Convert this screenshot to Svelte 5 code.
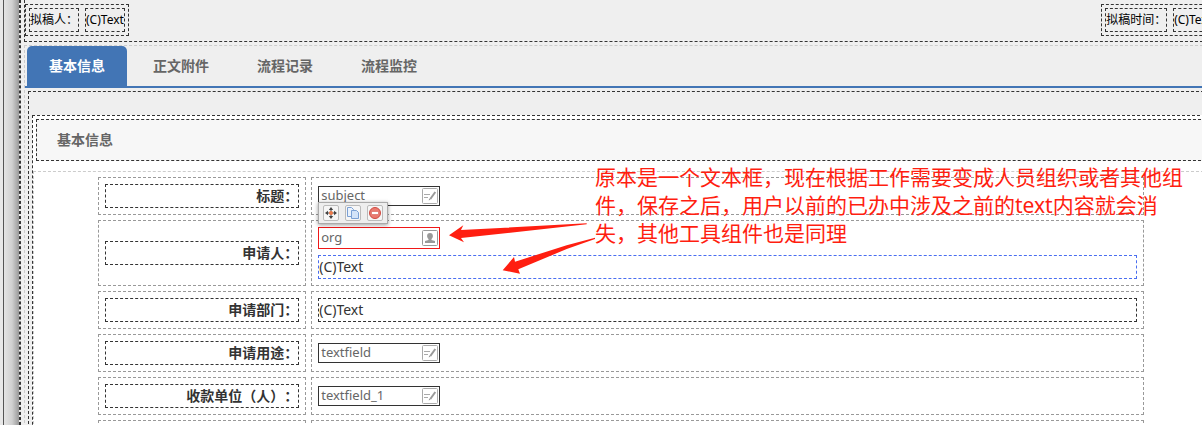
<script>
  let activeTab = $state('basic');
  let selected = $state('org');

  const tabs = [
    { id: 'basic', label: '基本信息' },
    { id: 'files', label: '正文附件' },
    { id: 'records', label: '流程记录' },
    { id: 'monitor', label: '流程监控' },
  ];

  const rows = [
    { id: 'subject', label: '标题：', field: 'subject', icon: 'edit' },
    { id: 'org', label: '申请人：', field: 'org', icon: 'person', text: '(C)Text', linked: true },
    { id: 'dept', label: '申请部门：', text: '(C)Text' },
    { id: 'usage', label: '申请用途：', field: 'textfield', icon: 'edit' },
    { id: 'payee', label: '收款单位（人）：', field: 'textfield_1', icon: 'edit' },
    { id: 'next', label: '', text: '' },
  ];
</script>

<div class="designer">
  <div class="splitter"></div>
  <main class="canvas">
    <header class="meta">
      <div class="meta-group">
        <span class="box">拟稿人：</span>
        <span class="box">(C)Text</span>
      </div>
      <div class="meta-group">
        <span class="box">拟稿时间：</span>
        <span class="box">(C)Text</span>
      </div>
    </header>

    <section class="body">
      <nav class="tabs">
        {#each tabs as tab}
          <button
            type="button"
            class="tab"
            class:active={activeTab === tab.id}
            onclick={() => (activeTab = tab.id)}
          >{tab.label}</button>
        {/each}
      </nav>

      <div class="panel">
        <div class="form">
          <h2>基本信息</h2>
          <div class="form-body">
            {#each rows as row}
              <div class="row">
                <div class="cell">
                  <label class="box name" for={row.field ? row.id : undefined}>{row.label}</label>
                </div>
                <div class="cell content">
                  {#if row.field}
                    <div class="field" class:selected={selected === row.id}>
                      <input
                        id={row.id}
                        type="text"
                        value={row.field}
                        readonly
                        onfocus={() => (selected = row.id)}
                      />
                      {#if row.icon === 'person'}
                        <svg class="icon" viewBox="0 0 16 16" aria-hidden="true">
                          <rect x="0.5" y="0.5" width="15" height="15" rx="1" fill="#fff" stroke="#999" />
                          <path d="M8 3c2 0 2.900 1.300 2.900 3 0 1.400-.7 2.500-1.400 3.100v.9l3.500 1V13H3v-2l3.500-1v-.9C5.800 8.500 5.100 7.400 5.100 6c0-1.700.9-3 2.900-3z" fill="#999" />
                        </svg>
                      {:else}
                        <svg class="icon" viewBox="0 0 16 16" aria-hidden="true">
                          <rect x="0.5" y="0.5" width="15" height="15" rx="1" fill="#fff" stroke="#aaa" />
                          <path d="M2 6.500h6M2 9.500h4" stroke="#aaa" />
                          <path d="M13.300 4L8.300 11" stroke="#999" stroke-width="2" />
                          <path d="M7.200 10.400l-.5 2.200 2-1z" fill="#999" />
                        </svg>
                      {/if}
                      {#if selected === row.id}
                        <div class="toolbar">
                          <button type="button" aria-label="移动">
                            <svg viewBox="0 0 14 14" aria-hidden="true">
                              <path d="M7 1l2.200 3H4.800zM7 13l-2.200-3h4.400zM1 7l3-2.200v4.400zM13 7l-3 2.200V4.800z" fill="#444" />
                              <path d="M7 3v8M3 7h8" stroke="#444" />
                              <circle cx="7" cy="7" r="2" fill="#ee7a4a" />
                            </svg>
                          </button>
                          <button type="button" aria-label="复制">
                            <svg viewBox="0 0 14 14" aria-hidden="true">
                              <path d="M1.500 1.500h4l2 2v7h-6z" fill="#eaf2fc" stroke="#7ba0d4" />
                              <path d="M5.500 4.500h5l2 2v6h-7z" fill="#d3e3f8" stroke="#7ba0d4" />
                            </svg>
                          </button>
                          <button type="button" aria-label="删除">
                            <svg viewBox="0 0 14 14" aria-hidden="true">
                              <circle cx="7" cy="7" r="5.500" fill="#ea7a70" stroke="#cf4a41" />
                              <rect x="3.500" y="5.500" width="7" height="3" rx="0.5" fill="#fff" stroke="#cf4a41" stroke-width="0.5" />
                            </svg>
                          </button>
                        </div>
                      {/if}
                    </div>
                  {/if}
                  {#if row.text !== undefined}
                    <div class="box value" class:linked={row.linked}>{row.text}</div>
                  {/if}
                </div>
              </div>
            {/each}

            <div class="note">
              <svg viewBox="0 0 150 60" aria-hidden="true">
                <path d="M0 24.300L14.300 14.300 12 19 137.700 12.300v1L12 27l3 4.300z" />
                <path d="M53.700 59.300L65 46l1 4.700 51.700-16.400L146 26.700V28l-28.300 10-48.400 20.300 1.700 4.400z" />
              </svg>
              <p>
                原本是一个文本框，现在根据工作需要变成人员组织或者其他组<br />件，保存之后，用户以前的已办中涉及之前的text内容就会消<br />失，其他工具组件也是同理
              </p>
            </div>
          </div>
        </div>
      </div>
    </section>
  </main>
</div>

<style>
  :global(body) {
    margin: 0;
    background: #efefef;
  }

  .designer {
    display: flex;
    height: 100vh;
    overflow: hidden;
    font-family: 'Noto Sans', 'Noto Sans CJK SC', sans-serif;
    font-size: 14px;
    line-height: 22px;
    color: #333;
    text-spacing-trim: space-all;
  }

  .splitter {
    flex: 0 0 21px;
    display: flex;
    box-sizing: border-box;
    border-right: 1px dashed #333;
    background: linear-gradient(90deg, #e8e8e8 3px, #555 3px, #555 4px, #e4e4e4 4px, #d0d0d0 12px, #999 19px, #efefef 19px);
  }
  .splitter::after {
    content: '';
    flex: 1;
    border-right: 1px dashed #333;
  }

  /* the form is drawn wider than the visible area */
  .canvas {
    flex: 1;
    min-width: 0;
    margin: 0 -16px 0 3px;
  }

  .box {
    border: 1px dashed #333;
    min-height: 22px;
  }

  .meta {
    display: flex;
    justify-content: space-between;
    padding: 4px 0 5px;
    border: 1px dashed #333;
    border-top: none;
    font-size: 12px;
    color: #000;
  }
  .meta-group {
    display: flex;
    gap: 6px;
    padding: 3px;
    border: 1px dashed #333;
  }

  .body {
    margin-top: 3px;
    border: 1px dashed #ccc;
  }

  .tabs {
    display: flex;
    gap: 4px;
    padding-left: 2px;
    border-bottom: 2px solid #4275b5;
  }
  .tab {
    height: 40px;
    padding: 0 22px;
    border: none;
    border-radius: 5px 5px 0 0;
    background: none;
    color: #666;
    font: inherit;
    font-weight: 700;
    cursor: pointer;
  }
  .tab.active {
    background: #4275b5;
    color: #fff;
  }

  .panel {
    margin: 3px;
    padding: 23px 3px 3px;
    border: 1px dashed #333;
  }

  .form {
    border: 1px dashed #333;
    background: #fff;
  }
  .form h2 {
    margin: 3px 3px 10px;
    padding: 9px 20px;
    border: 1px dashed #333;
    background: #f7f7f7;
    color: #666;
    font-size: 14px;
    font-weight: 700;
  }

  .form-body {
    position: relative;
    display: flex;
    flex-direction: column;
    gap: 5px;
    padding: 5px 64px;
    border: 1px dashed #ccc;
  }

  .row {
    display: grid;
    grid-template-columns: 1fr 4fr;
    gap: 5px;
  }
  .cell {
    display: flex;
    flex-direction: column;
    justify-content: center;
    padding: 6px;
    border: 1px dashed #999;
  }
  .content {
    gap: 6px;
  }
  .name {
    font-weight: 700;
    text-align: right;
  }
  .linked {
    border-color: #4a6ef0;
  }

  .field {
    position: relative;
    display: flex;
    align-items: center;
    box-sizing: border-box;
    width: 122px;
    height: 20px;
    padding-right: 1px;
    border: 1px solid #333;
    background: #fff;
  }
  .field.selected {
    height: 22px;
    border-color: #f01818;
  }
  .field input {
    flex: 1;
    min-width: 0;
    height: 18px;
    box-sizing: border-box;
    padding: 0 2px 2px;
    border: none;
    outline: none;
    background: none;
    color: #666;
    font: inherit;
    font-size: 13px;
    line-height: 16px;
  }
  .icon {
    flex: none;
    width: 16px;
    height: 16px;
  }

  .toolbar {
    position: absolute;
    left: -1px;
    bottom: 24px;
    display: flex;
    gap: 6px;
    padding: 2px 4px;
    border: 1px solid #aaa;
    background: #eee;
    box-shadow: 0 1px 4px rgba(0, 0, 0, 0.4);
  }
  .toolbar button {
    width: 16px;
    height: 16px;
    padding: 0;
    border: 1px solid #bbb;
    border-radius: 2px;
    background: #f6f6f6;
    cursor: pointer;
  }
  .toolbar svg {
    display: block;
    width: 14px;
    height: 14px;
  }

  .note {
    position: absolute;
    top: -9px;
    left: 415px;
    display: flex;
    color: #ff1e10;
    font-size: 21px;
    line-height: 28px;
    white-space: nowrap;
    pointer-events: none;
  }
  .note svg {
    width: 150px;
    height: 60px;
    margin-top: 48px;
    overflow: visible;
    fill: currentColor;
  }
  .note p {
    margin: 0 0 0 -4px;
  }
</style>
